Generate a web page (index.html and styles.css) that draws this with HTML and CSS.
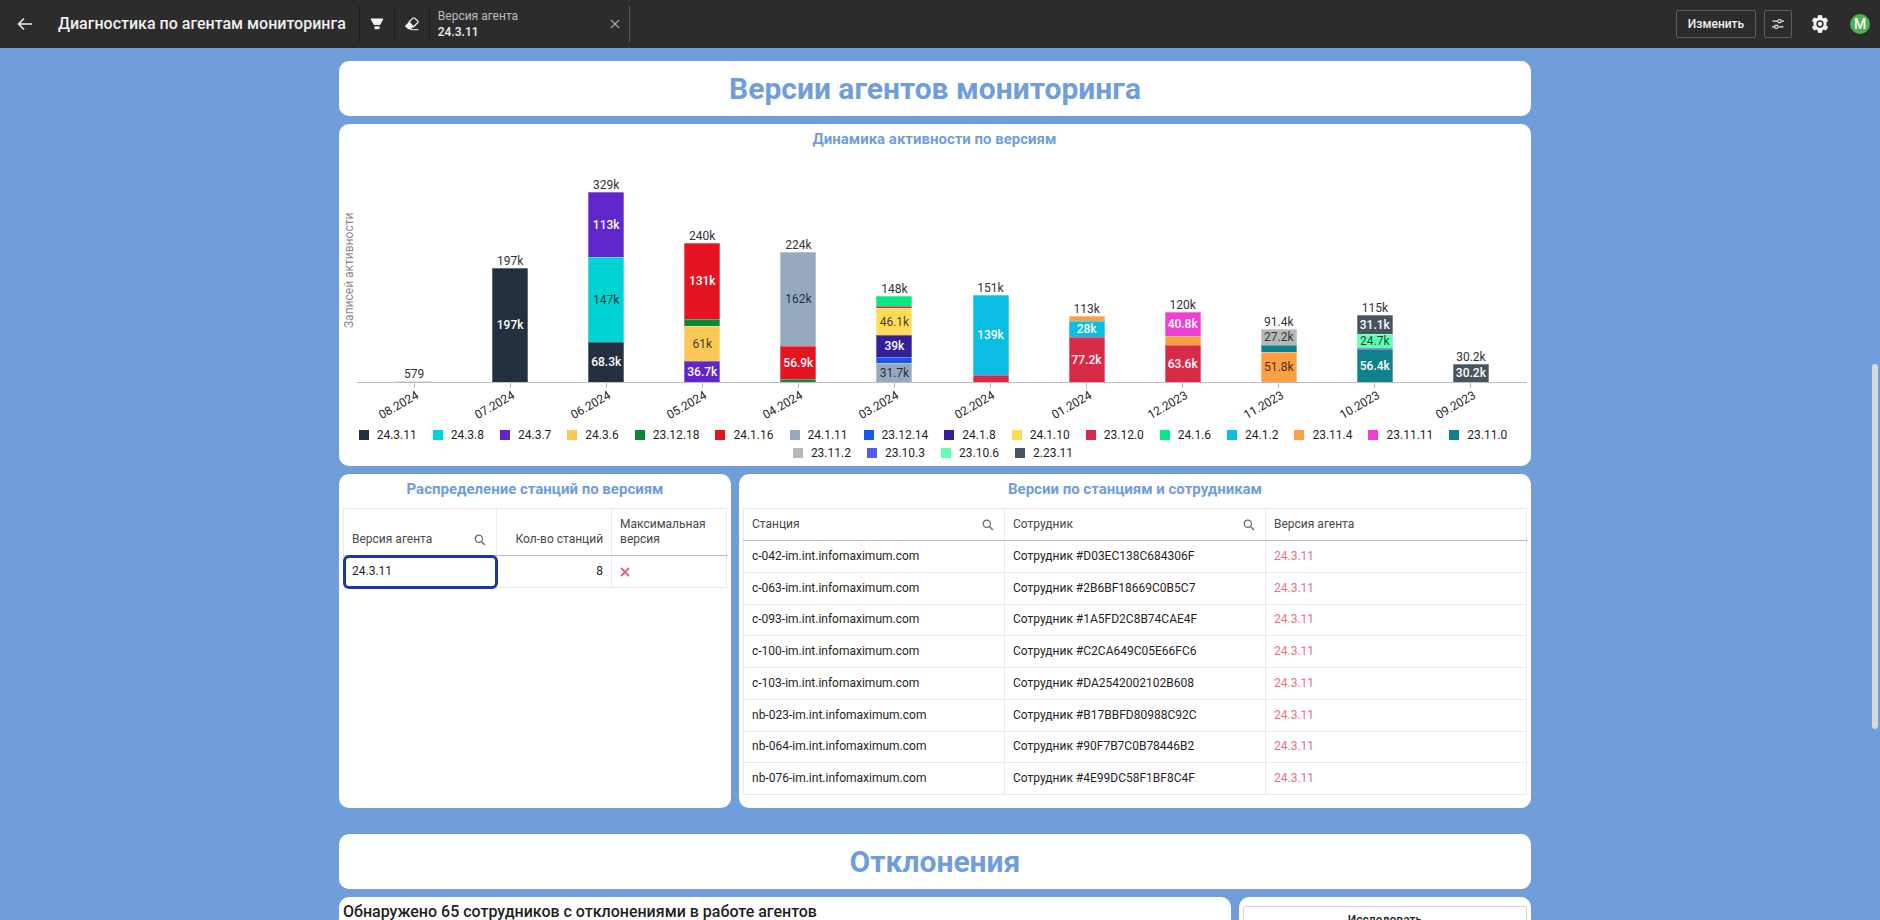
FILE: index.html
```html
<!DOCTYPE html>
<html lang="ru">
<head>
<meta charset="utf-8">
<title>Диагностика по агентам мониторинга</title>
<link rel="stylesheet" href="styles.css">
</head>
<body>
<svg class="sprite" aria-hidden="true">
  <symbol id="search" viewBox="0 0 16 16"><circle cx="6.8" cy="6.8" r="3.6"/><path d="M9.5 9.5 13 13"/></symbol>
</svg>
<header class="topbar">
  <button class="icon-btn back" aria-label="Назад">
    <svg width="16" height="14" viewBox="0 0 16 14" fill="none" stroke="#f0f0f0" stroke-width="1.5"><path d="M15 7H2M7 1.5 1.5 7 7 12.5"/></svg>
  </button>
  <h1 class="topbar-title">Диагностика по агентам мониторинга</h1>
  <button class="icon-btn tool" aria-label="Фильтр">
    <svg width="14" height="14" viewBox="0 0 14 14" fill="#f4f4f4"><path d="M1 1.5h12v1.6L10 8H4L1 3.100z"/><path d="M4.500 9.300h5v2.900h-5z"/></svg>
  </button>
  <button class="icon-btn tool" aria-label="Очистить">
    <svg width="16" height="16" viewBox="0 0 16 16"><path d="M1.300 9.600 5 5.900 9.600 10.500 6.800 13.300H4.300L1.300 10.600z" fill="#f4f4f4"/><path d="M5 6 9 2 10.600 2 14 5.300 14 6.500 9.500 10.800z" fill="none" stroke="#f4f4f4" stroke-width="1.200"/><path d="M6.500 13.700h8" stroke="#f4f4f4"/></svg>
  </button>
  <div class="filter">
    <div class="filter-text"><span class="filter-name">Версия агента</span><span class="filter-value">24.3.11</span></div>
    <button class="icon-btn" aria-label="Убрать фильтр">
      <svg width="10" height="10" viewBox="0 0 10 10" stroke="#b4b4b4" stroke-width="1.200"><path d="M.8.8l8.400 8.400M9.200.8.8 9.200"/></svg>
    </button>
  </div>
  <div class="actions">
    <button class="edit">Изменить</button>
    <button class="settings" aria-label="Параметры">
      <svg width="12" height="12" viewBox="0 0 12 12" fill="none" stroke="#e8e8e8" stroke-width="1.200"><path d="M.5 3.200h5M9.500 3.200H12M0 8.800h2.500M6.500 8.800h5"/><circle cx="7.500" cy="3.200" r="1.700"/><circle cx="4.300" cy="8.800" r="1.700"/></svg>
    </button>
    <button class="icon-btn gear" aria-label="Настройки">
      <svg width="20" height="20" viewBox="0 0 20 20"><path d="M8.400 1.500h3.200l.5 2.300 1.500.9 2.300-.8 1.700 2.900-1.500 1.700v3l1.500 1.700-1.700 2.900-2.300-.8-1.500.9-.5 2.300H8.400l-.5-2.300-1.500-.9-2.300.8-1.700-2.900 1.500-1.700v-3L2.400 6.800l1.700-2.900 2.300.8 1.500-.9z" fill="#f6f6f6" stroke="#f6f6f6" stroke-width=".8" stroke-linejoin="round"/><circle cx="10" cy="10" r="2.900" fill="#f6f6f6" stroke="#2c2c2c" stroke-width="1.500"/></svg>
    </button>
    <button class="avatar">М</button>
  </div>
</header>
<main class="board">
  <section class="card banner"><h2>Версии агентов мониторинга</h2></section>

  <section class="card chart-card">
    <h3>Динамика активности по версиям</h3>
    <div class="chart">
      <div class="y-title">Записей активности</div>
      <div class="plot">
        <div class="col"><span class="total">579</span><div class="seg none" style="height:1px"></div></div>
        <div class="col"><span class="total">197k</span><div class="seg v24-3-11" style="height:114px">197k</div></div>
        <div class="col"><span class="total">329k</span><div class="seg v24-3-7" style="height:65px">113k</div><div class="seg dark v24-3-8" style="height:85px">147k</div><div class="seg v24-3-11" style="height:40px">68.3k</div></div>
        <div class="col"><span class="total">240k</span><div class="seg v24-1-16" style="height:76px">131k</div><div class="seg v23-12-18" style="height:7px"></div><div class="seg dark v24-3-6" style="height:35px">61k</div><div class="seg v24-3-7" style="height:21px">36.7k</div></div>
        <div class="col"><span class="total">224k</span><div class="seg dark v24-1-11" style="height:94px">162k</div><div class="seg v24-1-16" style="height:33px">56.9k</div><div class="seg v23-12-18" style="height:3px"></div></div>
        <div class="col"><span class="total">148k</span><div class="seg v24-1-6" style="height:10px"></div><div class="seg v23-12-0" style="height:2px"></div><div class="seg dark v24-1-10" style="height:27px">46.1k</div><div class="seg v24-1-8" style="height:22px">39k</div><div class="seg v23-12-14" style="height:6px"></div><div class="seg dark v24-1-11" style="height:19px">31.7k</div></div>
        <div class="col"><span class="total">151k</span><div class="seg v24-1-2" style="height:80px">139k</div><div class="seg v23-12-0" style="height:7px"></div></div>
        <div class="col"><span class="total">113k</span><div class="seg v23-11-4" style="height:5px"></div><div class="seg v24-1-2" style="height:16px">28k</div><div class="seg v23-12-0" style="height:45px">77.2k</div></div>
        <div class="col"><span class="total">120k</span><div class="seg v23-11-11" style="height:24px">40.8k</div><div class="seg v23-11-4" style="height:9px"></div><div class="seg v23-12-0" style="height:37px">63.6k</div></div>
        <div class="col"><span class="total">91.4k</span><div class="seg dark v23-11-2" style="height:16px">27.2k</div><div class="seg v23-11-0" style="height:7px"></div><div class="seg dark v23-11-4" style="height:30px">51.8k</div></div>
        <div class="col"><span class="total">115k</span><div class="seg v2-23-11" style="height:19px">31.1k</div><div class="seg dark v23-10-6" style="height:14px">24.7k</div><div class="seg v23-10-3" style="height:1px"></div><div class="seg v23-11-0" style="height:33px">56.4k</div></div>
        <div class="col"><span class="total">30.2k</span><div class="seg v2-23-11" style="height:18px">30.2k</div></div>
      </div>
      <div class="x-axis">
        <div class="tick"><span>08.2024</span></div><div class="tick"><span>07.2024</span></div><div class="tick"><span>06.2024</span></div><div class="tick"><span>05.2024</span></div><div class="tick"><span>04.2024</span></div><div class="tick"><span>03.2024</span></div><div class="tick"><span>02.2024</span></div><div class="tick"><span>01.2024</span></div><div class="tick"><span>12.2023</span></div><div class="tick"><span>11.2023</span></div><div class="tick"><span>10.2023</span></div><div class="tick"><span>09.2023</span></div>
      </div>
    </div>
    <ul class="legend">
      <li><i class="v24-3-11"></i>24.3.11</li>
      <li><i class="v24-3-8"></i>24.3.8</li>
      <li><i class="v24-3-7"></i>24.3.7</li>
      <li><i class="v24-3-6"></i>24.3.6</li>
      <li><i class="v23-12-18"></i>23.12.18</li>
      <li><i class="v24-1-16"></i>24.1.16</li>
      <li><i class="v24-1-11"></i>24.1.11</li>
      <li><i class="v23-12-14"></i>23.12.14</li>
      <li><i class="v24-1-8"></i>24.1.8</li>
      <li><i class="v24-1-10"></i>24.1.10</li>
      <li><i class="v23-12-0"></i>23.12.0</li>
      <li><i class="v24-1-6"></i>24.1.6</li>
      <li><i class="v24-1-2"></i>24.1.2</li>
      <li><i class="v23-11-4"></i>23.11.4</li>
      <li><i class="v23-11-11"></i>23.11.11</li>
      <li><i class="v23-11-0"></i>23.11.0</li>
      <li><i class="v23-11-2"></i>23.11.2</li>
      <li><i class="v23-10-3"></i>23.10.3</li>
      <li><i class="v23-10-6"></i>23.10.6</li>
      <li><i class="v2-23-11"></i>2.23.11</li>
    </ul>
  </section>

  <section class="card third">
    <h3>Распределение станций по версиям</h3>
    <table class="data versions">
      <colgroup><col class="c-version"><col class="c-count"><col class="c-max"></colgroup>
      <thead><tr>
        <th><div class="head">Версия агента<button aria-label="Поиск"><svg><use href="#search"/></svg></button></div></th>
        <th class="num">Кол-во станций</th>
        <th>Максимальная версия</th>
      </tr></thead>
      <tbody><tr>
        <td class="selected">24.3.11</td>
        <td class="num">8</td>
        <td><svg class="cross" viewBox="0 0 10 10" role="img" aria-label="Нет"><path d="M1 1l8 8M9 1 1 9"/></svg></td>
      </tr></tbody>
    </table>
  </section>

  <section class="card two-thirds">
    <h3>Версии по станциям и сотрудникам</h3>
    <table class="data stations">
      <thead><tr>
        <th><div class="head">Станция<button aria-label="Поиск"><svg><use href="#search"/></svg></button></div></th>
        <th><div class="head">Сотрудник<button aria-label="Поиск"><svg><use href="#search"/></svg></button></div></th>
        <th>Версия агента</th>
      </tr></thead>
      <tbody>
        <tr><td>c-042-im.int.infomaximum.com</td><td>Сотрудник #D03EC138C684306F</td><td class="old">24.3.11</td></tr>
        <tr><td>c-063-im.int.infomaximum.com</td><td>Сотрудник #2B6BF18669C0B5C7</td><td class="old">24.3.11</td></tr>
        <tr><td>c-093-im.int.infomaximum.com</td><td>Сотрудник #1A5FD2C8B74CAE4F</td><td class="old">24.3.11</td></tr>
        <tr><td>c-100-im.int.infomaximum.com</td><td>Сотрудник #C2CA649C05E66FC6</td><td class="old">24.3.11</td></tr>
        <tr><td>c-103-im.int.infomaximum.com</td><td>Сотрудник #DA2542002102B608</td><td class="old">24.3.11</td></tr>
        <tr><td>nb-023-im.int.infomaximum.com</td><td>Сотрудник #B17BBFD80988C92C</td><td class="old">24.3.11</td></tr>
        <tr><td>nb-064-im.int.infomaximum.com</td><td>Сотрудник #90F7B7C0B78446B2</td><td class="old">24.3.11</td></tr>
        <tr><td>nb-076-im.int.infomaximum.com</td><td>Сотрудник #4E99DC58F1BF8C4F</td><td class="old">24.3.11</td></tr>
      </tbody>
    </table>
  </section>

  <section class="card banner next"><h2>Отклонения</h2></section>

  <section class="card summary"><p>Обнаружено 65 сотрудников с отклонениями в работе агентов</p></section>
  <section class="card explore"><button>Исследовать</button></section>
</main>
<div class="scroll-thumb"></div>
</body>
</html>
```
FILE: styles.css
```css
* { box-sizing: border-box; }

body {
  margin: 0;
  height: 100vh;
  overflow: hidden;
  background: #709edb;
  color: #1f1f1f;
  font: 12px/15px Roboto, "Liberation Sans", sans-serif;
}

h1, h2, h3, p, ul { margin: 0; padding: 0; }
button { font: inherit; color: inherit; background: none; border: 0; padding: 0; cursor: pointer; }
svg { display: block; }
.sprite { display: none; }

/* Top bar */
.topbar {
  display: flex;
  align-items: center;
  height: 48px;
  background: #2c2c2c;
  color: #f0f0f0;
}
.icon-btn { display: flex; align-items: center; justify-content: center; }
.back { width: 50px; height: 48px; }
.topbar-title { margin: 0 13px 0 8px; font-size: 16px; line-height: 20px; font-weight: 500; white-space: nowrap; }
.tool { width: 35px; height: 36px; border-left: 1px solid #1d1d1d; }
.filter {
  display: flex;
  align-items: center;
  justify-content: space-between;
  width: 201px;
  height: 36px;
  padding: 0 9px 0 8px;
  border-left: 1px solid #1d1d1d;
  border-right: 1px solid #555;
}
.filter-text { display: flex; flex-direction: column; line-height: 16px; }
.filter-name { color: #bdbdbd; }
.filter-value { font-weight: 500; }
.actions { display: flex; align-items: center; margin-left: auto; padding-right: 10px; }
.edit, .settings { height: 28px; border: 1px solid #5c5c5c; border-radius: 2px; }
.edit { width: 80px; font-weight: 500; }
.settings { display: flex; align-items: center; justify-content: center; width: 28px; margin-left: 8px; }
.gear { margin: 0 20px 0 18px; }
.avatar {
  width: 20px;
  height: 20px;
  border-radius: 50%;
  background: #4caf50;
  color: #fff;
  font-size: 14px;
  line-height: 20px;
  font-weight: 500;
}

/* Board */
.board {
  display: grid;
  grid-template-columns: repeat(12, 1fr);
  gap: 8px;
  max-width: 1202px;
  margin: 0 auto;
  padding: 13px 10px 0 0;
}
.board { transform: none; }
.card { grid-column: span 12; background: #fff; border-radius: 10px; padding: 0 4px 13px; }
.third { grid-column: span 4; }
.two-thirds { grid-column: span 8; }
h2, h3 { color: #709edb; font-weight: 700; text-align: center; }
h3 { padding: 7px 0 11px; font-size: 15px; line-height: 16px; }
.banner { padding: 10px 0 9px; }
.banner h2 { font-size: 30px; line-height: 36px; }
.next { margin-top: 18px; }

/* Chart */
.chart-card { padding: 0 4px 4px 3px; }
.chart { display: grid; grid-template-columns: 15px 1fr; grid-template-rows: 225px 43px; }
.y-title {
  writing-mode: vertical-rl;
  transform: rotate(180deg);
  text-align: center;
  line-height: 15px;
  color: #8a8a8a;
}
.plot {
  display: flex;
  border-bottom: 1px solid #bdbdbd;
  padding: 0 8px 0 9px;
}
.col { flex: 1; display: flex; flex-direction: column; justify-content: flex-end; align-items: center; }
.total { line-height: 14px; color: #333; }
.seg {
  display: flex;
  align-items: center;
  justify-content: center;
  width: 36px;
  color: #fff;
  font-weight: 500;
  line-height: 12px;
  box-shadow: inset 1px 1px rgba(255, 255, 255, .3), inset -1px 0 rgba(255, 255, 255, .3);
}
.dark { color: rgba(0, 0, 0, .75); font-weight: 400; }
.x-axis { grid-column: 2; display: flex; padding: 0 8px 0 9px; }
.tick { flex: 1; }
.tick::before { content: ""; display: block; width: 1px; height: 5px; margin: 0 auto; background: #bdbdbd; }
.tick span {
  display: block;
  width: 50%;
  text-align: right;
  line-height: 14px;
  transform: rotate(-30deg);
  transform-origin: right top;
}
.legend { display: flex; flex-wrap: wrap; justify-content: center; column-gap: 16px; padding-right: 3px; list-style: none; line-height: 18px; }
.legend li { display: flex; align-items: center; gap: 8px; }
.legend i { width: 10px; height: 10px; }

/* Version colours */
.none { background: #ccc; }
.v24-3-11 { background: #232f3e; }
.v24-3-8 { background: #00d3d3; }
.v24-3-7 { background: #6026cc; }
.v24-3-6 { background: #fcc959; }
.v23-12-18 { background: #0a8a35; }
.v24-1-16 { background: #e61320; }
.v24-1-11 { background: #95a9bf; }
.v23-12-14 { background: #1d55e8; }
.v24-1-8 { background: #341f97; }
.v24-1-10 { background: #ffdc58; }
.v23-12-0 { background: #d92b48; }
.v24-1-6 { background: #0be881; }
.v24-1-2 { background: #0abde3; }
.v23-11-4 { background: #ff9f43; }
.v23-11-11 { background: #ef3fd3; }
.v23-11-0 { background: #10808d; }
.v23-11-2 { background: #b8b8b8; }
.v23-10-3 { background: #525cf5; }
.v23-10-6 { background: #62ffb4; }
.v2-23-11 { background: #485460; }

/* Tables */
.data { width: 100%; table-layout: fixed; border-collapse: collapse; }
.data th, .data td { padding: 8px; border: 1px solid #ebebeb; text-align: left; }
.data th { font-weight: 400; color: #484848; vertical-align: bottom; border-bottom-color: #b8b8b8; }
.data .num { text-align: right; }
.head { display: flex; justify-content: space-between; }
.head button { height: 15px; }
.head svg { width: 16px; height: 16px; fill: none; stroke: #666; stroke-width: 1.2; }
.c-version { width: 40%; }
.c-count { width: 30%; }
.c-max { width: 30%; }
.selected { outline: 3px solid #1f3799; outline-offset: -2px; border-radius: 5px; }
.cross { width: 10px; height: 10px; fill: none; stroke: #e5667a; stroke-width: 2; }
.old { color: #e5737f; }
.stations { height: 287px; }
.stations th { height: 32px; }
.data.stations td { padding: 7px 8px; }

/* Deviations */
.summary { grid-column: span 9; padding-top: 5px; }
.summary p { font-size: 16px; line-height: 20px; font-weight: 500; }
.explore { grid-column: span 3; padding-top: 9px; }
.explore button { width: 100%; height: 28px; border: 1px solid #d4d4d4; border-radius: 2px; font-weight: 500; }

.scroll-thumb {
  position: absolute;
  right: 2px;
  top: 364px;
  width: 6px;
  height: 365px;
  border-radius: 3px;
  background: #d9d9d9;
}
```
